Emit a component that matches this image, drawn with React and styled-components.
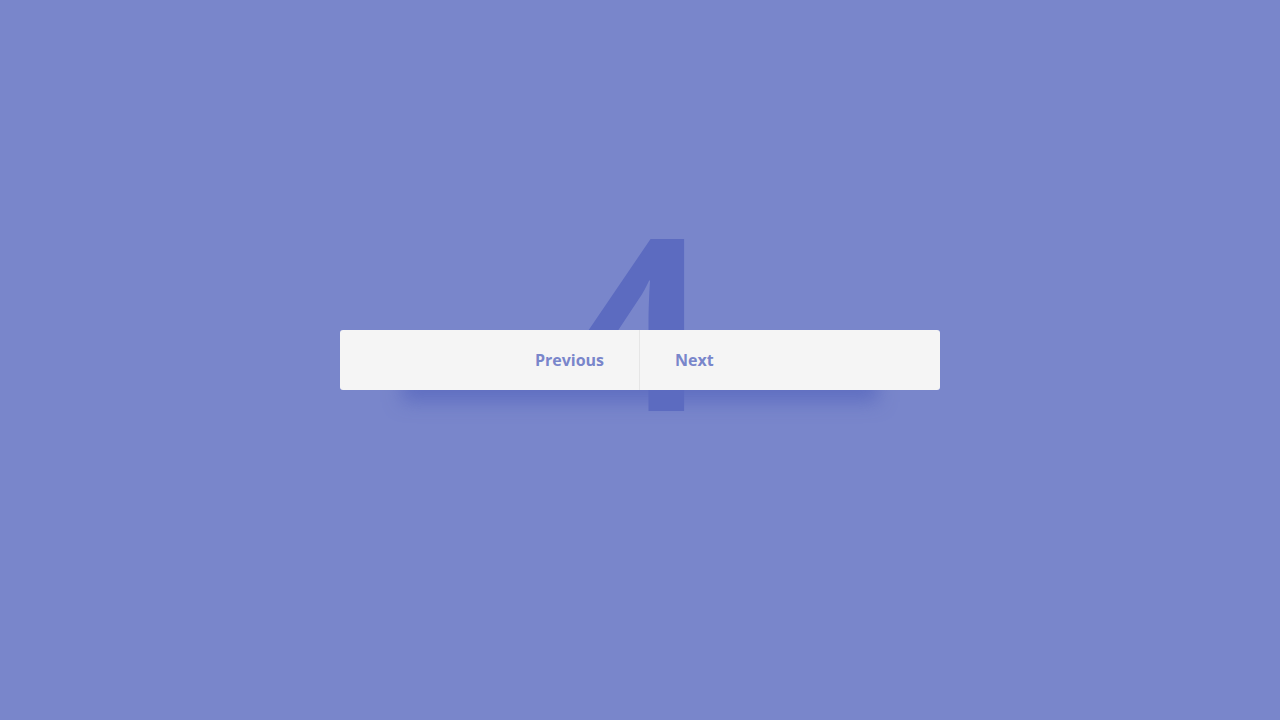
import styled, { createGlobalStyle } from 'styled-components';

const GlobalStyle = createGlobalStyle`
  html {
    height: 100%;
    background: #7986cb;
  }
  body {
    margin: 0;
    height: 100%;
    font-family: 'Open Sans', 'Liberation Sans', sans-serif;
  }
  #root {
    height: 100%;
  }
`;

const Page = styled.div`
  height: 100%;
  display: flex;
  align-items: center;
  justify-content: center;
`;

const Pager = styled.div`
  position: relative;
  isolation: isolate;
  width: 600px;
  height: 60px;
`;

// big page number sitting behind the bar
const PageNumber = styled.span`
  position: absolute;
  left: 50%;
  top: -133px;
  transform: translateX(-50%);
  font-size: 241px;
  font-weight: 700;
  line-height: 1;
  color: #5c6bc0;
  user-select: none;
`;

const Bar = styled.div`
  position: relative;
  display: flex;
  height: 100%;
  background: #f5f5f5;
  border-radius: 3px;

  &::after {
    content: '';
    position: absolute;
    left: 62px;
    right: 62px;
    top: 10px;
    bottom: 0;
    z-index: -2;
    box-shadow: 0 12px 18px rgba(92, 107, 192, 0.85);
  }
`;

const PageButton = styled.button`
  flex: 1 1 50%;
  box-sizing: border-box;
  display: flex;
  align-items: center;
  justify-content: ${(p) => (p.$side === 'left' ? 'flex-end' : 'flex-start')};
  padding: 0 35px;
  border: none;
  border-right: ${(p) => (p.$side === 'left' ? '1px solid #e6e6e6' : 'none')};
  background: transparent;
  font-family: 'Open Sans', 'Liberation Sans', sans-serif;
  font-size: 16px;
  font-weight: 700;
  color: #7986cb;
  cursor: pointer;
`;

const App = () => {
  return (
    <>
      <GlobalStyle />
      <Page>
        <Pager>
          <PageNumber>4</PageNumber>
          <Bar>
            <PageButton $side="left">Previous</PageButton>
            <PageButton $side="right">Next</PageButton>
          </Bar>
        </Pager>
      </Page>
    </>
  );
};

export default App;
